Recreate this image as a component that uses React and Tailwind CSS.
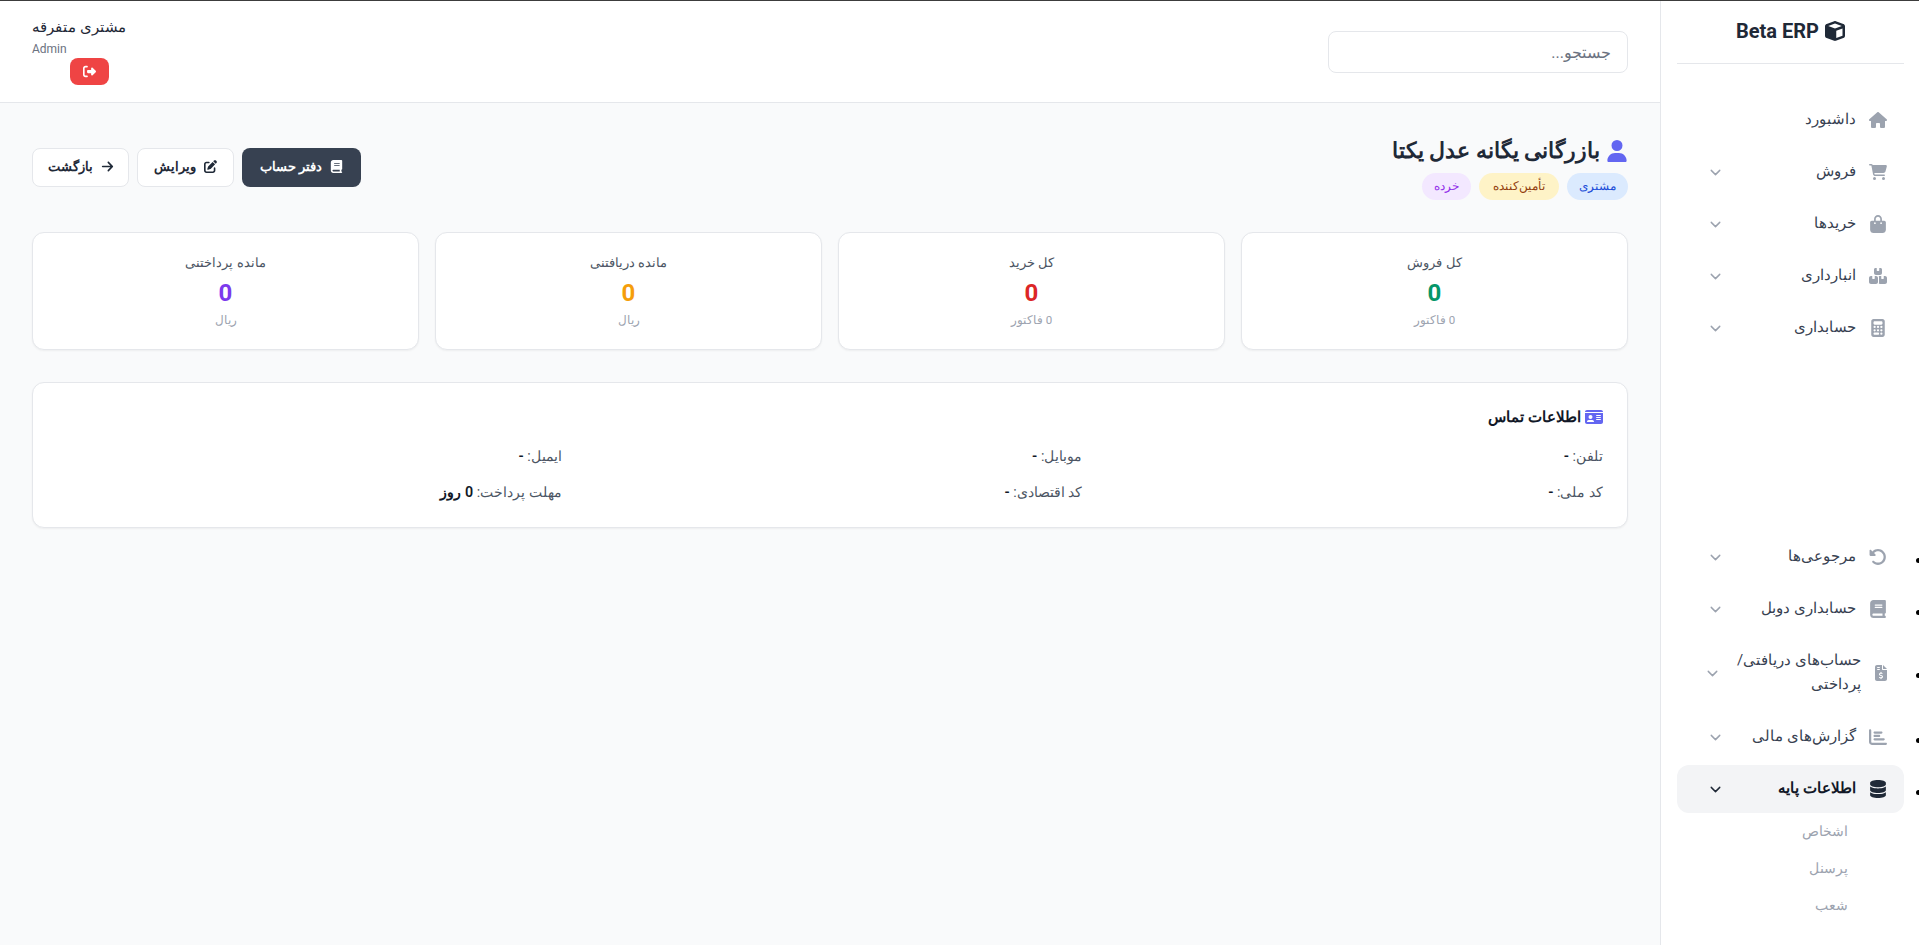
import { ChevronDown } from "lucide-react";
import {
  FaArrowRight, FaBagShopping, FaBook, FaBoxesStacked, FaCalculator, FaCartShopping, FaChartBar, FaCube, FaDatabase,
  FaFileInvoiceDollar, FaHouse, FaIdCard, FaPenToSquare, FaRightFromBracket, FaRotateLeft, FaUser,
} from "react-icons/fa6";

const topMenu = [
  { label: "داشبورد", icon: FaHouse, plain: true },
  { label: "فروش", icon: FaCartShopping },
  { label: "خریدها", icon: FaBagShopping },
  { label: "انبارداری", icon: FaBoxesStacked },
  { label: "حسابداری", icon: FaCalculator },
];

const bottomMenu = [
  { label: "مرجوعی‌ها", icon: FaRotateLeft },
  { label: "حسابداری دوبل", icon: FaBook },
  { label: "حساب‌های دریافتی/پرداختی", icon: FaFileInvoiceDollar, wrap: true },
  { label: "گزارش‌های مالی", icon: FaChartBar },
];

const stats = [
  { title: "کل فروش", value: "0", color: "text-[#059669]", sub: "0 فاکتور" },
  { title: "کل خرید", value: "0", color: "text-[#dc2626]", sub: "0 فاکتور" },
  { title: "مانده دریافتنی", value: "0", color: "text-[#f59e0b]", sub: "ریال" },
  { title: "مانده پرداختنی", value: "0", color: "text-[#7c3aed]", sub: "ریال" },
];

function MenuItem({ item, active }) {
  const Icon = item.icon;
  return (
    <div
      className={`flex items-center rounded-xl py-3 text-[15px] leading-6 ${item.wrap ? "gap-[10px] pr-[13px] pl-[27px]" : "gap-3 pr-4 pl-[30px]"} ${active ? "bg-[#f3f4f6] font-semibold text-[#111827]" : "text-[#374151]"}`}
    >
      <span className={`flex w-5 flex-none justify-center ${active ? "text-[#1f2937]" : "text-[#9ca3af]"}`}>
        <Icon size={item.wrap ? 16 : 18} />
      </span>
      <span className="flex-1 -translate-y-px">{item.label}</span>
      {!item.plain && <ChevronDown size={17} className={`flex-none ${active ? "text-[#1f2937]" : "text-[#9ca3af]"}`} />}
    </div>
  );
}

function Sidebar() {
  return (
    <aside className="w-[259px] flex-none border-l border-[#e5e7eb] bg-white pr-[15px] pl-4">
      <div className="flex h-[63px] items-center justify-center gap-[6px] border-b border-[#e5e7eb] pb-[3px] text-xl font-bold text-[#1f2937]">
        <FaCube size={20} />
        <span>Beta ERP</span>
      </div>
      <ul className="mt-8 flex flex-col gap-1">
        {topMenu.map((item) => (
          <li key={item.label}>
            <MenuItem item={item} />
          </li>
        ))}
      </ul>
      <ul className="mt-[181px] flex list-disc flex-col gap-1">
        {bottomMenu.map((item) => (
          <li key={item.label}>
            <MenuItem item={item} />
          </li>
        ))}
        <li>
          <MenuItem item={{ label: "اطلاعات پایه", icon: FaDatabase }} active />
          <div className="flex flex-col pr-14 text-sm text-[#9ca3af]">
            <span className="h-[37px] leading-[37px]">اشخاص</span>
            <span className="h-[37px] leading-[37px]">پرسنل</span>
            <span className="h-[37px] leading-[37px]">شعب</span>
          </div>
        </li>
      </ul>
    </aside>
  );
}

function Header() {
  return (
    <header className="flex h-[102px] flex-none items-start justify-between border-b border-[#e5e7eb] bg-white px-8">
      <input
        type="text"
        placeholder="جستجو..."
        className="mt-[30px] h-[42px] w-[300px] rounded-lg border border-[#e5e7eb] px-4 text-base outline-none placeholder:text-[#6b7280]"
      />
      <div className="mt-[17px] flex flex-col">
        <span className="text-[14.5px] font-medium leading-5 text-[#1f2937]">مشتری متفرقه</span>
        <span className="mt-[3px] text-left text-xs leading-4 text-[#6b7280]">Admin</span>
        <button className="mt-[1px] mr-[17px] flex h-[27px] w-[39px] items-center justify-center self-start rounded-lg bg-[#ef4444] text-white">
          <FaRightFromBracket size={13} />
        </button>
      </div>
    </header>
  );
}

function StatCard({ stat }) {
  return (
    <div className="flex h-[118px] flex-col items-center rounded-xl border border-[#e5e7eb] bg-white pt-5 shadow-xs">
      <span className="text-[12.5px] leading-5 text-[#4b5563]">{stat.title}</span>
      <span className={`mt-1 text-2xl leading-8 font-bold ${stat.color}`}>{stat.value}</span>
      <span className="mt-[3px] text-[11.5px] leading-4 text-[#9ca3af]">{stat.sub}</span>
    </div>
  );
}

function Field({ label, value }) {
  return (
    <div className="text-[14.25px] leading-5 text-[#4b5563]">
      {label}: <span className="font-semibold text-[#111827]">{value}</span>
    </div>
  );
}

export default function App() {
  return (
    <div dir="rtl" className="flex h-[945px] flex-col overflow-hidden font-['Roboto','Inter',sans-serif]">
      <div className="h-px flex-none bg-[#3c3c3c]" />
      <div className="flex min-h-0 flex-1">
        <Sidebar />
        <div className="flex min-w-0 flex-1 flex-col bg-[#f9fafb]">
          <Header />
          <main className="px-8 pt-8">
            <div className="flex items-center justify-between">
              <div>
                <h1 className="flex h-8 items-center gap-[6px] text-[22px] font-bold text-[#1f2937]">
                  <FaUser size={22} className="text-[#6366f1]" />
                  <span className="-translate-y-px">بازرگانی یگانه عدل یکتا</span>
                </h1>
                <div className="mt-[6px] flex gap-2 text-xs leading-[27px]">
                  <span className="rounded-full bg-[#dbeafe] px-3 text-[#1d4ed8]">مشتری</span>
                  <span className="rounded-full bg-[#fef3c7] px-[14px] text-[#92400e]">تأمین‌کننده</span>
                  <span className="rounded-full bg-[#f3e8ff] px-3 text-[#9333ea]">خرده</span>
                </div>
              </div>
              <div className="flex gap-2 text-[13px] font-semibold">
                <button className="flex h-[39px] w-[119px] items-center justify-center gap-2 rounded-lg bg-[#374151] pb-[2px] text-white">
                  <FaBook size={13} />
                  دفتر حساب
                </button>
                <button className="flex h-[39px] w-[97px] items-center justify-center gap-2 rounded-lg border border-[#e5e7eb] bg-white pb-[2px] text-[#1f2937]">
                  <FaPenToSquare size={13} />
                  ویرایش
                </button>
                <button className="flex h-[39px] w-[97px] items-center justify-center gap-2 rounded-lg border border-[#e5e7eb] bg-white pb-[2px] text-[#1f2937]">
                  <FaArrowRight size={13} />
                  بازگشت
                </button>
              </div>
            </div>

            <div className="mt-8 grid grid-cols-4 gap-4">
              {stats.map((stat) => (
                <StatCard key={stat.title} stat={stat} />
              ))}
            </div>

            <div className="mt-8 rounded-xl border border-[#e5e7eb] bg-white px-6 pt-6 pb-[25px] shadow-xs">
              <h2 className="flex items-center gap-1 text-[15px] leading-5 font-semibold text-[#111827]">
                <FaIdCard size={18} className="text-[#6366f1]" />
                اطلاعات تماس
              </h2>
              <div className="mt-[19px] grid grid-cols-3 gap-4">
                <Field label="تلفن" value="-" />
                <Field label="موبایل" value="-" />
                <Field label="ایمیل" value="-" />
                <Field label="کد ملی" value="-" />
                <Field label="کد اقتصادی" value="-" />
                <Field label="مهلت پرداخت" value="0 روز" />
              </div>
            </div>
          </main>
        </div>
      </div>
    </div>
  );
}
